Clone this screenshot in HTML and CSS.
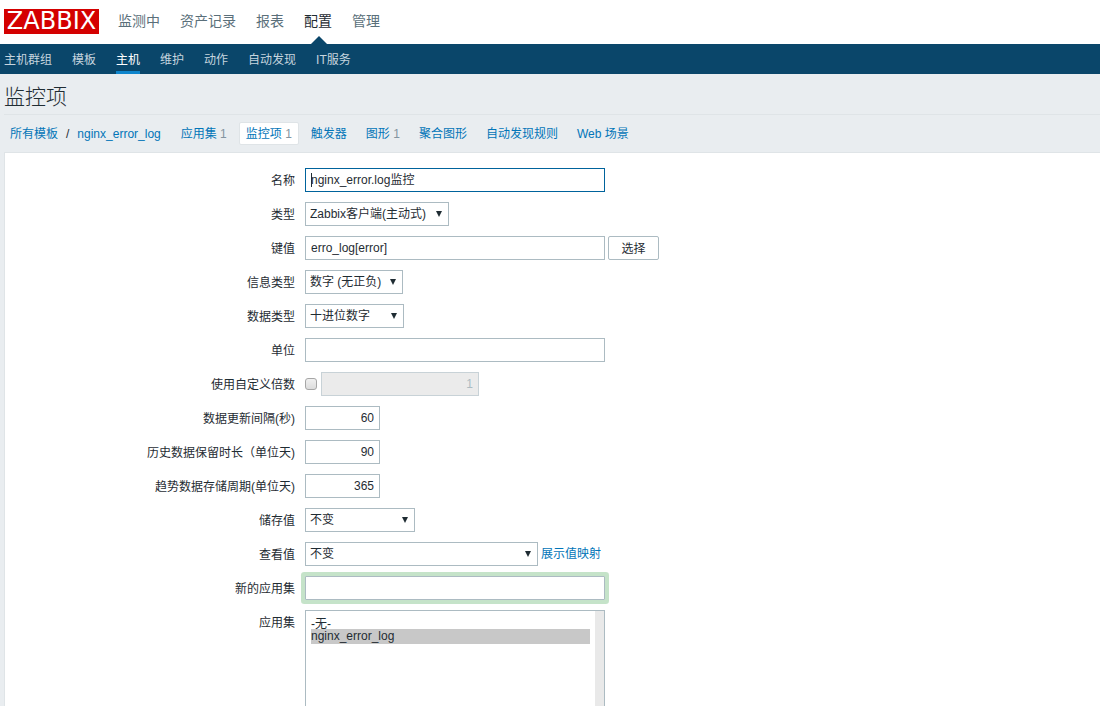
FILE: index.html
```html
<!DOCTYPE html>
<html lang="zh-CN">
<head>
<meta charset="utf-8">
<meta name="viewport" content="width=device-width, initial-scale=1">
<title>监控项</title>
<link rel="stylesheet" href="styles.css">
</head>
<body>
<header class="top">
  <a class="logo" href="#">ZABBIX</a>
  <nav class="main-nav">
    <a href="#">监测中</a>
    <a href="#">资产记录</a>
    <a href="#">报表</a>
    <a href="#" class="selected">配置</a>
    <a href="#">管理</a>
  </nav>
</header>
<nav class="sub-nav">
  <a href="#">主机群组</a>
  <a href="#">模板</a>
  <a href="#" class="selected">主机</a>
  <a href="#">维护</a>
  <a href="#">动作</a>
  <a href="#">自动发现</a>
  <a href="#">IT服务</a>
</nav>
<main class="article">
  <h1 class="title">监控项</h1>
  <nav class="crumbs">
    <span class="path"><a href="#">所有模板</a><span>/</span><a href="#">nginx_error_log</a></span>
    <span class="tab"><a href="#">应用集</a> <small>1</small></span>
    <span class="tab current"><a href="#">监控项</a> <small>1</small></span>
    <span class="tab"><a href="#">触发器</a></span>
    <span class="tab"><a href="#">图形</a> <small>1</small></span>
    <span class="tab"><a href="#">聚合图形</a></span>
    <span class="tab"><a href="#">自动发现规则</a></span>
    <span class="tab"><a href="#">Web 场景</a></span>
  </nav>
  <form class="panel">
    <div class="row">
      <label for="name">名称</label>
      <div class="field"><input class="text wide focused" id="name" type="text" value="nginx_error.log监控"></div>
    </div>
    <div class="row">
      <label for="type">类型</label>
      <div class="field"><span class="drop drop-type"><select id="type"><option>Zabbix客户端(主动式)</option></select></span></div>
    </div>
    <div class="row">
      <label for="key">键值</label>
      <div class="field"><input class="text wide" id="key" type="text" value="erro_log[error]"><button class="btn" type="button">选择</button></div>
    </div>
    <div class="row">
      <label for="info">信息类型</label>
      <div class="field"><span class="drop drop-info"><select id="info"><option>数字 (无正负)</option></select></span></div>
    </div>
    <div class="row">
      <label for="data">数据类型</label>
      <div class="field"><span class="drop drop-data"><select id="data"><option>十进位数字</option></select></span></div>
    </div>
    <div class="row">
      <label for="unit">单位</label>
      <div class="field"><input class="text wide" id="unit" type="text"></div>
    </div>
    <div class="row">
      <label for="multi">使用自定义倍数</label>
      <div class="field"><input class="check" id="multi" type="checkbox"><input class="text factor" type="text" value="1" aria-label="倍数" disabled></div>
    </div>
    <div class="row">
      <label for="delay">数据更新间隔(秒)</label>
      <div class="field"><input class="text number" id="delay" type="text" value="60"></div>
    </div>
    <div class="row">
      <label for="history">历史数据保留时长（单位天)</label>
      <div class="field"><input class="text number" id="history" type="text" value="90"></div>
    </div>
    <div class="row">
      <label for="trends">趋势数据存储周期(单位天)</label>
      <div class="field"><input class="text number" id="trends" type="text" value="365"></div>
    </div>
    <div class="row">
      <label for="store">储存值</label>
      <div class="field"><span class="drop drop-store"><select id="store"><option>不变</option></select></span></div>
    </div>
    <div class="row">
      <label for="show">查看值</label>
      <div class="field"><span class="drop drop-show"><select id="show"><option>不变</option></select></span><a href="#">展示值映射</a></div>
    </div>
    <div class="row">
      <label for="newapp">新的应用集</label>
      <div class="field"><input class="text wide new" id="newapp" type="text"></div>
    </div>
    <div class="row">
      <label for="apps">应用集</label>
      <div class="field"><span class="listbox"><select id="apps" multiple size="6"><option>-无-</option><option class="chosen">nginx_error_log</option></select></span></div>
    </div>
  </form>
</main>
</body>
</html>
```
FILE: styles.css
```css
* { box-sizing: border-box; }
body {
  display: flex;
  flex-direction: column;
  height: 100vh;
  margin: 0;
  overflow: hidden;
  background: #e9edf0;
  color: #1f2c33;
  font: 12px/16px "Liberation Sans", "Noto Sans CJK SC", sans-serif;
}
a { color: #0275b8; text-decoration: none; }
input, select, button { font: inherit; color: inherit; margin: 0; }

.top {
  display: flex;
  flex: none;
  gap: 19px;
  height: 44px;
  padding: 0 4px;
  background: #fff;
}
.logo {
  width: 95px;
  height: 25px;
  margin-top: 9px;
  background: #d40000;
  color: #fff;
  font: 24px/25px "DejaVu Sans", sans-serif;
  text-align: center;
}
.main-nav { display: flex; gap: 20px; }
.main-nav a { position: relative; color: #5a6f7a; font-size: 14px; line-height: 42px; }
.main-nav .selected { color: #1f2c33; }
.main-nav .selected::after {
  content: "";
  position: absolute;
  left: 50%;
  bottom: 0;
  margin-left: -7px;
  border: 8px solid transparent;
  border-top: 0;
  border-bottom-color: #0a466a;
}

.sub-nav {
  display: flex;
  flex: none;
  gap: 20px;
  height: 30px;
  padding: 0 4px;
  background: #0a466a;
}
.sub-nav a { color: #c6d5df; line-height: 32px; }
.sub-nav .selected { color: #fff; border-bottom: 3px solid #0f85cc; }

.article { display: flex; flex: 1; flex-direction: column; min-height: 0; padding-left: 4px; }
.title {
  flex: none;
  margin: 0;
  height: 41px;
  border-bottom: 1px solid #dfe4e7;
  font-size: 21px;
  font-weight: 300;
  line-height: 46px;
}
.crumbs { display: flex; flex: none; align-items: center; height: 37px; gap: 5px; padding-left: 6px; }
.path { display: flex; gap: 8px; margin-right: 8px; padding-top: 1px; }
.tab { padding: 2px 6px 1px; border: 1px solid transparent; border-radius: 2px; line-height: 18px; }
.tab small { font-size: 12px; color: #8394a0; }
.tab.current { background: #fff; border-color: #dfe4e7; }

.panel {
  display: flex;
  flex: 1;
  flex-direction: column;
  gap: 10px;
  min-height: 0;
  padding: 15px 0 0;
  overflow: hidden;
  background: #fff;
  border: 1px solid #dfe4e7;
  border-width: 1px 0 0 1px;
}
.row { display: flex; flex: none; gap: 10px; }
.row:last-child { flex: 1; min-height: 0; }
.row label { width: 290px; height: 24px; line-height: 26px; text-align: right; }
.field { display: flex; align-items: center; }
.row:last-child .field { align-items: stretch; }
.text {
  height: 24px;
  padding: 0 5px;
  border: 1px solid #acbbc2;
  background: #fff;
  outline: 0;
}
.wide { width: 300px; }
.focused {
  padding-bottom: 3px;
  border-color: #00639c;
  background: linear-gradient(#1f2c33, #1f2c33) 5px 4px / 1px 14px no-repeat #fff;
}
.number { width: 75px; text-align: right; }
.factor { width: 158px; margin-left: 4px; text-align: right; }
.factor:disabled { background: #ebebeb; border-color: #c8d2d7; color: #acbbc2; }
.new { box-shadow: 0 0 0 4px #c5e3c9; border-radius: 1px; }
.btn {
  width: 51px;
  height: 24px;
  margin-left: 3px;
  padding: 1px 0 0;
  background: #fff;
  border: 1px solid #acbbc2;
  border-radius: 2px;
}
.check {
  appearance: none;
  width: 12px;
  height: 12px;
  border: 1px solid #a6a6a6;
  border-radius: 3px;
  background: linear-gradient(#f0f0f0, #dcdcdc);
}
.drop { position: relative; display: flex; margin-right: 3px; }
.drop select {
  appearance: none;
  width: 100%;
  height: 24px;
  padding: 0 4px;
  border: 1px solid #acbbc2;
  border-radius: 0;
  background: #fff;
}
.drop::after {
  content: "";
  position: absolute;
  right: 7px;
  top: 9px;
  border: 3px solid transparent;
  border-top: 6px solid #1f2c33;
  border-bottom: 0;
  pointer-events: none;
}
.drop-type { width: 144px; }
.drop-info { width: 98px; }
.drop-data { width: 99px; }
.drop-store { width: 110px; }
.drop-show { width: 233px; }
.listbox {
  display: flex;
  width: 300px;
  border: 1px solid #acbbc2;
  border-bottom: 0;
  background: #fff;
}
.listbox::after { content: ""; width: 9px; background: #e9e9e9; }
.listbox select {
  flex: 1;
  height: 100%;
  padding: 3px 5px;
  border: 0;
  background: #fff;
  outline: 0;
  scrollbar-width: none;
}
.listbox option { min-height: 0; height: 15px; padding: 0; line-height: 13px; }
.listbox .chosen { background: #c8c8c8; }
```
